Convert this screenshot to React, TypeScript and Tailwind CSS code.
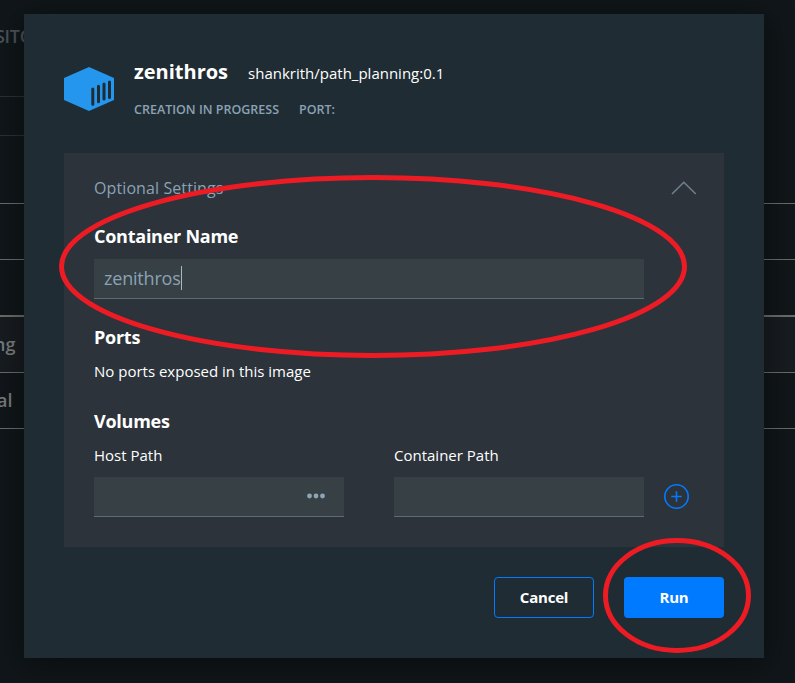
import React from "react";

function BackgroundTable() {
  return (
    <div className="flex h-[683px] flex-col bg-[#101619] text-[18px] font-semibold text-[#787b7d]">
      <div className="h-[97px] w-6 overflow-hidden border-b border-[#2c3032] pt-[24px]">
        <div className="-ml-[5px] text-[18px] leading-6 font-semibold tracking-[-0.3px] text-[#4a525a]">SITORY</div>
      </div>
      <div className="h-[39px] w-6 border-b border-[#2c3032]" />
      <div className="h-[68px] border-b border-[#6b6b6b]" />
      <div className="h-[56px] border-b border-[#6b6b6b]" />
      <div className="h-[57px] border-b-2 border-[#6b6b6b]" />
      <div className="flex h-[56px] items-center border-b border-[#6b6b6b] bg-[#171c20]">
        <span className="-ml-[6px]">ng</span>
      </div>
      <div className="flex h-[56px] items-center border-b border-[#6b6b6b]">
        <span className="-ml-[3px]">al</span>
      </div>
    </div>
  );
}

function ContainerLogo() {
  return (
    <svg width="50" height="44" viewBox="0 0 50 44" className="mt-[7px] shrink-0">
      <path d="M25 0 50 11V33L25 44 0 33V11Z" fill="#2496ed" />
      <g stroke="#202c33" strokeWidth="3" strokeLinecap="round">
        <path d="M28.8 22V37.3M34.5 19.3V34.7M40 17V32M45.5 15V30.5" />
      </g>
    </svg>
  );
}

function Field({ className, children }: { className: string; children?: React.ReactNode }) {
  return (
    <div className={`flex h-10 items-center border-b border-[#5b6b77] bg-[#364045] ${className}`}>
      {children}
    </div>
  );
}

function OptionalSettings() {
  return (
    <section className="mt-[32px] h-[394px] bg-[#2c333b] pl-[30px] text-white">
      <div className="flex h-[70px] items-center justify-between pr-[27px]">
        <span className="text-[16px] tracking-[0.1px] text-[#8ba2b4]">Optional Settings</span>
        <svg width="26" height="14" viewBox="0 0 26 14" fill="none" stroke="#71808d" strokeWidth="1.5">
          <path d="M1 13 12.8 1.3 24.8 13" />
        </svg>
      </div>
      <h2 className="h-9 text-[18px] leading-[27px] font-bold tracking-[-0.25px]">Container Name</h2>
      <Field className="w-[550px] pl-[10px]">
        <span className="mb-[2px] text-[18px] leading-6 tracking-[-0.2px] text-[#8ba2b4]">zenithros</span>
        <span className="mb-[1px] h-6 w-px bg-[#a5b8c5]" />
      </Field>
      <h2 className="mt-[25px] text-[18px] leading-[27px] font-bold tracking-[-0.25px]">Ports</h2>
      <p className="mt-[8px] text-[15px] leading-6">No ports exposed in this image</p>
      <h2 className="mt-[25px] text-[18px] leading-[27px] font-bold tracking-[-0.25px]">Volumes</h2>
      <div className="mt-[8px] flex">
        <div className="w-[250px]">
          <div className="h-[34px] text-[15px] leading-6">Host Path</div>
          <Field className="w-full justify-end pr-[19px]">
            <svg width="18" height="6" viewBox="0 0 18 6" fill="#8fa4b5" className="mb-px">
              <circle cx="2.5" cy="3" r="2.4" />
              <circle cx="9" cy="3" r="2.4" />
              <circle cx="15.5" cy="3" r="2.4" />
            </svg>
          </Field>
        </div>
        <div className="ml-[50px] w-[250px]">
          <div className="h-[34px] text-[15px] leading-6">Container Path</div>
          <Field className="w-full" />
        </div>
        <svg className="mt-[41px] ml-5" width="25" height="25" viewBox="0 0 25 25" fill="none" stroke="#007bff" strokeWidth="1.6">
          <circle cx="12.5" cy="12.5" r="11.7" />
          <path d="M12.5 7.3V17.7M7.3 12.5H17.7" />
        </svg>
      </div>
    </section>
  );
}

function Dialog() {
  return (
    <div className="absolute top-[14px] left-6 h-[644px] w-[740px] bg-[#202c33] px-10 pt-[46px] shadow-[0_5px_30px_rgba(0,0,0,0.45)]">
      <header className="flex h-[61px]">
        <ContainerLogo />
        <div className="ml-5">
          <div className="flex h-6 items-baseline leading-6 text-white">
            <h1 className="text-[20px] font-bold">zenithros</h1>
            <span className="ml-5 text-[15px]">shankrith/path_planning:0.1</span>
          </div>
          <div className="mt-[16px] flex gap-5 text-[12.5px] leading-5 font-semibold text-[#8ba2b4]">
            <span>CREATION IN PROGRESS</span>
            <span>PORT:</span>
          </div>
        </div>
      </header>
      <OptionalSettings />
      <footer className="mt-[30px] flex justify-end gap-[30px] text-[15px] font-bold tracking-[-0.2px] text-white">
        <button className="h-[41px] w-[100px] rounded-[4px] border border-[#007bff]">Cancel</button>
        <button className="h-[41px] w-[100px] rounded-[4px] bg-[#007bff]">Run</button>
      </footer>
    </div>
  );
}

export default function App() {
  return (
    <main className="relative h-[683px] w-[795px] overflow-hidden font-['Open_Sans','Noto_Sans',sans-serif]">
      <BackgroundTable />
      <Dialog />
      <svg className="pointer-events-none absolute inset-0" width="795" height="683" fill="none" stroke="#ed1c24" strokeWidth="5">
        <ellipse cx="373" cy="266.5" rx="311.5" ry="89" />
        <ellipse cx="677" cy="595.5" rx="71.5" ry="55" />
      </svg>
    </main>
  );
}
